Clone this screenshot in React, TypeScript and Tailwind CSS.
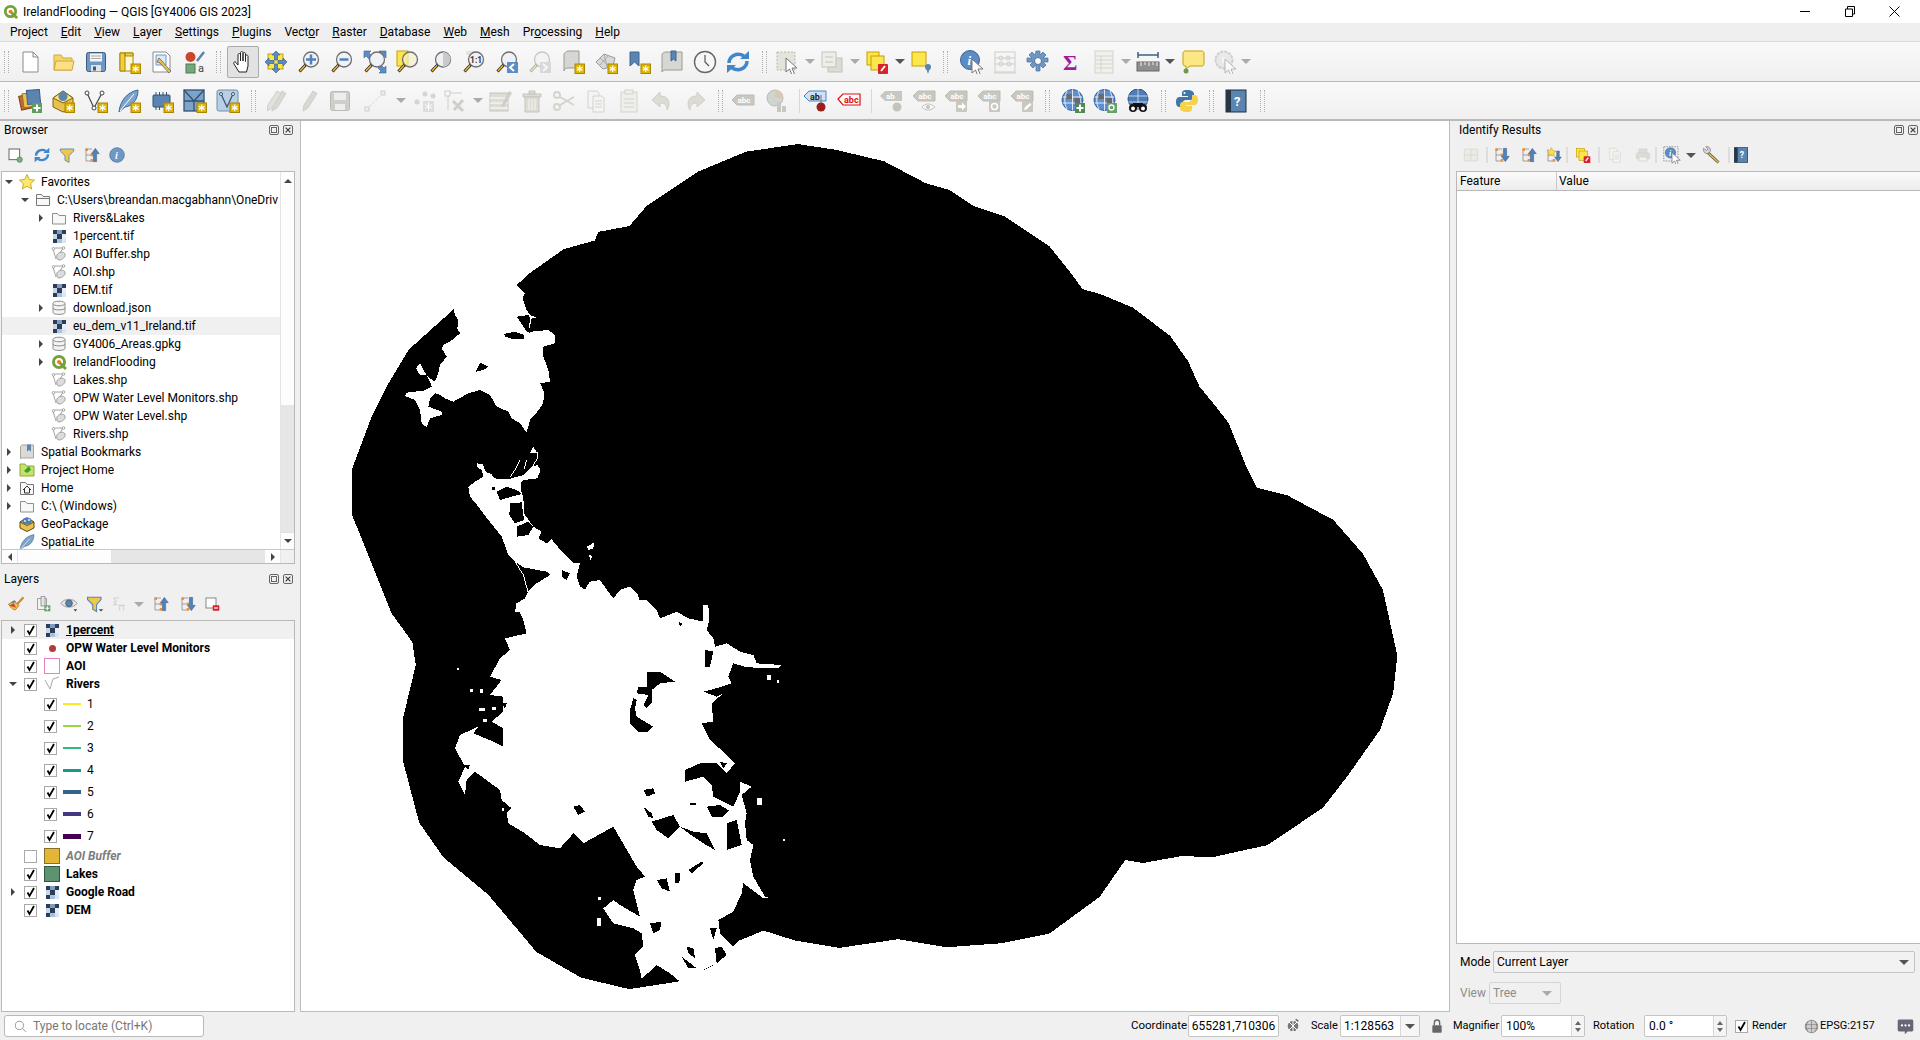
import React from 'react';

/* ---------- small shared drawings ---------- */
const Star = () => (
  <g>
    <rect x="14" y="14" width="9.5" height="9.5" fill="#e0b400" stroke="#a88600" />
    <path d="M18.7 15.5v6.5M15.8 17.2l5.8 3.2M21.6 17.2l-5.8 3.2" stroke="#fff" strokeWidth="1.2" />
  </g>
);
const Mag = ({ fill = '#eef2f6', children }: { fill?: string; children?: React.ReactNode }) => (
  <g>
    <circle cx="14" cy="9.5" r="7.5" fill={fill} stroke="#6f6f6f" strokeWidth="1.3" />
    {children}
    <path d="M8.5 15L2.5 21.5" stroke="#222" strokeWidth="3" />
    <path d="M8 15.5L3 21" stroke="#eebd2c" strokeWidth="1.5" />
  </g>
);
const Cursor = ({ x = 0, y = 0 }: { x?: number; y?: number }) => (
  <path transform={`translate(${x} ${y})`} d="M0 0v14l3.5-3 2.5 6 2.5-1-2.5-6H11z" fill="#fff" stroke="#777" strokeWidth="1" />
);
const Lbl = ({ c = '#c9c8c0', t = '#fff', children }: { c?: string; t?: string; children?: React.ReactNode }) => (
  <g>
    <path d="M1 7l5-5h17v10H6z" fill={c} stroke="#bdbcb4" />
    <text x="6.5" y="10" fontSize="8" fontWeight="700" fontFamily="Roboto, sans-serif" fill={t}>abc</text>
    {children}
  </g>
);
const Globe = ({ children }: { children?: React.ReactNode }) => (
  <g>
    <circle cx="11.5" cy="11" r="10.5" fill="#5f8fd0" stroke="#2f5f9f" />
    <path d="M1.5 8h20M1.5 14h20M11.5 .5v21M6 2c-3 6-3 12 0 18M17 2c3 6 3 12 0 18" stroke="#fff" strokeWidth=".8" fill="none" />
    <path d="M6 5h5v5H5zM13 9h6v6h-5z" fill="#6a6a6a" />
    {children}
  </g>
);
const Pencil = ({ c = '#d9d8d2' }: { c?: string }) => (
  <path d="M5 22l1-6L15 2l4 2.5L10 19z" fill={c} stroke="#cfcec8" />
);
const Arrows = () => (
  <path
    d="M12 1l4 4h-2.5v5H10.500V5H8zM12 23l-4-4h2.500v-5h3v5H16zM1 12l4-4v2.500h5v3H5V16zM23 12l-4 4v-2.500h-5v-3h5V8z"
    fill="#5b8cc4"
    stroke="#3c6596"
    strokeWidth=".7"
  />
);

const icons: Record<string, React.ReactNode> = {
  new: <path d="M5 2h10l5 5v15H5zM15 2v5h5" fill="#fff" stroke="#8a8a8a" />,
  open: (
    <g stroke="#cda93f">
      <path d="M3 20V5h7l2 3h9v12z" fill="#f3d56b" />
      <path d="M3 20l2-9h18l-2 9z" fill="#fbe184" />
    </g>
  ),
  save: (
    <g>
      <rect x="2.500" y="2.500" width="19" height="19" rx="2" fill="#6d97c4" stroke="#415a75" />
      <rect x="6" y="3.500" width="12" height="8" fill="#f4f4f4" />
      <path d="M7 6h10M7 8.500h10" stroke="#aaa" />
      <rect x="7" y="15" width="10" height="6.500" fill="#e4e4e4" />
      <rect x="9" y="16.500" width="3" height="4" fill="#415a75" />
    </g>
  ),
  newLayout: (
    <g>
      <path d="M3 3h13v18H3z" fill="#fff8d8" stroke="#a88600" />
      <path d="M3 3h5v18H3zM8 3h8v3H8z" fill="#f1d040" stroke="#a88600" />
      <Star />
    </g>
  ),
  layouts: (
    <g>
      <path d="M3 2h13l4 4v16H3z" fill="#fff" stroke="#8a8a8a" />
      <path d="M6 5h10v10H6z" fill="#dfe8f4" stroke="#6d97c4" />
      <path d="M9 8l3 3 6 7 3 3-2 2-9-10-3-1z" fill="#e6c04a" stroke="#666" strokeWidth=".8" />
    </g>
  ),
  style: (
    <g>
      <circle cx="7.500" cy="7" r="5" fill="#c9472a" />
      <path d="M14 11L21 2" stroke="#5b84b0" strokeWidth="2.500" />
      <rect x="3" y="14" width="9" height="9" fill="#74a77e" stroke="#4d7a57" />
      <text x="15" y="22" fontSize="11" fontFamily="Roboto, sans-serif" fill="#444">a</text>
    </g>
  ),
  hand: (
    <path
      d="M8 22l-5-8c-1-2 1-3 2-1.500l2 2.500V5c0-2 2.500-2 2.500 0v6V3c0-2 2.500-2 2.500 0v8V4c0-2 2.500-2 2.500 0v7.500-5c0-2 2.500-2 2.500 0V16l-1.500 6z"
      fill="#fff"
      stroke="#222"
      strokeWidth="1"
    />
  ),
  pan: (
    <g>
      <rect x="4" y="4" width="15" height="15" fill="#fbe74c" stroke="#c8a000" />
      <Arrows />
    </g>
  ),
  zoomIn: <Mag><path d="M14 4.500v10M9 9.500h10" stroke="#4f81bd" strokeWidth="2.500" /></Mag>,
  zoomOut: <Mag><path d="M9.500 9.500h9" stroke="#4f81bd" strokeWidth="2.500" /></Mag>,
  zoomFull: (
    <g>
      <path d="M1 1h7l-2 2 3 3-3 3-3-3-2 2zM23 1v7l-2-2-3 3-3-3 3-3-2-2zM23 23h-7l2-2-3-3 3-3 3 3 2-2z" fill="#5b8cc4" stroke="#3c6596" strokeWidth=".6" />
      <Mag />
    </g>
  ),
  zoomSel: (
    <g>
      <rect x="1" y="1" width="11" height="15" fill="#fbe74c" stroke="#c8a000" />
      <Mag fill="#f6f0c8aa" />
    </g>
  ),
  zoomLayer: <Mag><path d="M14 2v15a7.500 7.500 0 0 0 0-15z" fill="#c9c9c9" /></Mag>,
  zoom11: (
    <g>
      <path d="M4 1h12v4H4z" fill="#e4e4e4" />
      <Mag><text x="8" y="13" fontSize="8.500" fontWeight="700" fontFamily="Roboto, sans-serif" fill="#333">1:1</text></Mag>
    </g>
  ),
  zoomLast: (
    <g>
      <Mag />
      <rect x="12" y="12" width="11" height="11" fill="#5b8cc4" />
      <path d="M19 14l-4 3.500 4 3.500" stroke="#fff" strokeWidth="2" fill="none" />
    </g>
  ),
  zoomNext: (
    <g opacity=".35">
      <Mag />
      <rect x="12" y="12" width="11" height="11" fill="#aaa" />
      <path d="M15 14l4 3.500-4 3.500" stroke="#fff" strokeWidth="2" fill="none" />
    </g>
  ),
  newMap: (
    <g>
      <path d="M3 4c2-3 4-3 4-3h11v17H7c-2 0-4 1-4 3z" fill="#d6d6d2" stroke="#9a9a94" />
      <Star />
    </g>
  ),
  new3d: (
    <g>
      <path d="M2 12L10 4l11 4-2 8-10 3z" fill="#d9d9d5" stroke="#999" />
      <path d="M6 8l9 8M10 4l3 13M14 6l-8 9" stroke="#aaa" />
      <Star />
    </g>
  ),
  newBookmark: (
    <g>
      <path d="M3 2h9v14l-4.500-4L3 16z" fill="#5b84b0" stroke="#3c6596" />
      <Star />
    </g>
  ),
  bookmarks: (
    <g>
      <path d="M2 5c0-2 2-3 4-3h16v18H6c-2 0-4 1-4 2z" fill="#d6d6d2" stroke="#9a9a94" />
      <path d="M11 1h5v10l-2.500-2L11 11z" fill="#5b84b0" stroke="#3c6596" />
    </g>
  ),
  clock: (
    <g>
      <circle cx="12" cy="12" r="10.500" fill="#f6f6f6" stroke="#666" strokeWidth="1.400" />
      <path d="M12 5v7l4 4" stroke="#555" strokeWidth="1.200" fill="none" />
    </g>
  ),
  refresh: (
    <g fill="none" stroke="#3f87c9" strokeWidth="3.500">
      <path d="M3 13C3 6 11 2 18 6" />
      <path d="M21 11c0 7-8 11-15 7" />
      <path d="M14 9h9V1zM10 15H1v8z" fill="#3f87c9" stroke="none" />
    </g>
  ),
  select: (
    <g>
      <rect x="2" y="2" width="18" height="18" fill="#e4e3dc" stroke="#b5b4ac" strokeDasharray="2 1.500" />
      <Cursor x={11} y={8} />
    </g>
  ),
  attrs: (
    <g stroke="#c3c2ba">
      <rect x="8" y="8" width="14" height="14" fill="#dddcd4" />
      <rect x="2" y="2" width="14" height="15" fill="#eeeee8" />
      <path d="M5 7h8M5 12h8" fill="none" />
    </g>
  ),
  deselect: (
    <g>
      <rect x="2" y="2" width="12" height="13" fill="#fbe74c" stroke="#c8a000" />
      <rect x="6" y="6" width="13" height="14" fill="#fbe74c" stroke="#c8a000" />
      <rect x="13" y="14" width="10" height="10" rx="1" fill="#d8232a" />
      <path d="M16 21l4-5" stroke="#fff" strokeWidth="2" />
    </g>
  ),
  selLoc: (
    <g>
      <rect x="2" y="2" width="14" height="14" fill="#fbe74c" stroke="#c8a000" />
      <circle cx="18" cy="17" r="3" fill="#5b84b0" />
      <path d="M16 18l2 6 2-6" fill="#5b84b0" />
    </g>
  ),
  identify: (
    <g>
      <circle cx="10" cy="10" r="9.500" fill="#5b8cc4" stroke="#3c6596" />
      <text x="7.500" y="15" fontSize="13" fontStyle="italic" fontWeight="700" fontFamily="Liberation Serif, serif" fill="#fff">i</text>
      <Cursor x={12} y={9} />
    </g>
  ),
  field: (
    <g stroke="#cfcec8" fill="none">
      <rect x="2" y="2" width="20" height="20" />
      <path d="M2 8h20M2 14h20M1 23h22" />
      <circle cx="8" cy="8" r="2" />
      <circle cx="15" cy="8" r="2" />
      <circle cx="8" cy="14" r="2" />
      <circle cx="16" cy="14" r="2" />
    </g>
  ),
  gear: (
    <g>
      <path d="M10 1h4v4l3-3 3 3-3 3h5v4h-5l3 3-3 3-3-3v6h-4v-6l-3 3-3-3 3-3H1v-4h5L3 5l3-3 3 3z" fill="#6d97c4" stroke="#4b7099" strokeWidth=".7" />
      <circle cx="12" cy="11" r="3.500" fill="#fff" stroke="#4b7099" />
    </g>
  ),
  sigma: <text x="4" y="20" fontSize="22" fontWeight="700" fontFamily="Liberation Serif, serif" fill="#9c1d9c">Σ</text>,
  table: (
    <g stroke="#d5d4ce" fill="#f0f0ec">
      <rect x="3" y="1" width="18" height="22" />
      <path d="M3 6h18M3 10h18M3 14h18M3 18h18M9 6v17" fill="none" />
    </g>
  ),
  measure: (
    <g>
      <path d="M2 5h20M2 2v6M22 2v6" stroke="#3c5f85" strokeWidth="1.500" fill="none" />
      <rect x="1" y="12" width="22" height="9" fill="#8f8f8f" stroke="#666" />
      <path d="M5 12v4M9 12v3M13 12v4M17 12v3M21 12v4" stroke="#eee" />
    </g>
  ),
  tip: (
    <g>
      <path d="M2 3c0-1 1-2 2-2h17c1 0 2 1 2 2v11c0 1-1 2-2 2H9l-4 3v-3H4c-1 0-2-1-2-2z" fill="#fbe884" stroke="#c8a000" />
      <circle cx="5" cy="21" r="2.500" fill="#6d9a4a" />
    </g>
  ),
  deco: (
    <g opacity=".5">
      <circle cx="11" cy="10" r="8.500" fill="#ddd" stroke="#aaa" strokeDasharray="3 1" strokeWidth="2" />
      <path d="M9 6l6 4-6 4z" fill="#f4f4f4" />
      <Cursor x={12} y={9} />
    </g>
  ),
  dsm: (
    <g>
      <rect x="2" y="6" width="13" height="14" transform="rotate(-12 8 13)" fill="#c86a2e" stroke="#7a3e1a" />
      <rect x="5" y="4" width="13" height="14" transform="rotate(-8 11 11)" fill="#e8c14e" stroke="#8f7420" />
      <rect x="9" y="1" width="13" height="14" transform="rotate(-5 15 8)" fill="#5b84b0" stroke="#3c5f85" />
      <rect x="14" y="14" width="10" height="10" fill="#5e9f5e" />
      <path d="M19 15.500v7M15.500 19h7" stroke="#fff" strokeWidth="2" />
    </g>
  ),
  newGpkg: (
    <g>
      <path d="M2 9l10-7 10 7v9l-10 5-10-5z" fill="#e8c14e" stroke="#7d6412" />
      <path d="M2 9l10 5 10-5-10-7z" fill="#fbe27b" stroke="#7d6412" />
      <circle cx="12" cy="7.500" r="4.500" fill="#5b84b0" />
      <Star />
    </g>
  ),
  newShp: (
    <g>
      <path d="M3 4l7 15 8-15" fill="none" stroke="#444" strokeWidth="1.200" />
      <circle cx="3" cy="4" r="2" fill="#fff" stroke="#444" />
      <circle cx="10" cy="19" r="2" fill="#fff" stroke="#444" />
      <circle cx="18" cy="4" r="2" fill="#fff" stroke="#444" />
      <Star />
    </g>
  ),
  newSpatialite: (
    <g>
      <path d="M2 23C3 12 10 3 21 1c0 9-5 16-13 17z" fill="#7ba3cb" stroke="#3c6596" />
      <path d="M3 22L17 5" stroke="#fff" />
      <Star />
    </g>
  ),
  newTemp: (
    <g>
      <rect x="3" y="6" width="17" height="12" rx="1" fill="#5b84b0" stroke="#34526f" />
      <path d="M6 3v3M9.500 3v3M13 3v3M16.500 3v3M6 18v3M9.500 18v3" stroke="#34526f" />
      <Star />
    </g>
  ),
  newMesh: (
    <g>
      <rect x="1" y="1" width="20" height="21" fill="#7ba3cb" stroke="#34526f" strokeWidth="1.300" />
      <path d="M1 12h20M11 12v10M1 1l10 11M21 1L11 12" stroke="#34526f" strokeWidth="1.300" />
      <Star />
    </g>
  ),
  newVirtual: (
    <g>
      <rect x="1" y="1" width="21" height="21" rx="2" fill="#b9cfe4" stroke="#6d8eae" />
      <path d="M5 5l6 13 6-13" fill="none" stroke="#34526f" strokeWidth="1.200" />
      <circle cx="5" cy="5" r="1.500" fill="#fff" stroke="#34526f" />
      <circle cx="17" cy="5" r="1.500" fill="#fff" stroke="#34526f" />
      <Star />
    </g>
  ),
  multiEdit: (
    <g>
      <Pencil />
      <g transform="translate(-5 0)"><Pencil c="#e2e1db" /></g>
    </g>
  ),
  pencil: <g transform="translate(1 0)"><Pencil /></g>,
  saveEdits: (
    <g>
      <rect x="2.500" y="2.500" width="19" height="19" rx="2" fill="#cfcfc9" stroke="#bbb" />
      <rect x="6" y="4" width="12" height="7" fill="#eee" />
      <rect x="7" y="15" width="10" height="6" fill="#eee" />
    </g>
  ),
  digit: (
    <g stroke="#d0cfc8" fill="#eee">
      <path d="M4 20L20 4" strokeDasharray="2 2" />
      <rect x="2" y="18" width="4" height="4" />
      <rect x="18" y="2" width="4" height="4" />
    </g>
  ),
  addPts: (
    <g fill="#d5d4cd">
      <circle cx="5" cy="13" r="2.500" />
      <circle cx="13" cy="5" r="2.500" />
      <circle cx="21" cy="7" r="2.500" />
      <rect x="11" y="12" width="11" height="11" fill="#ddd" />
      <path d="M16.500 13.500v8M13 15.500l7 4M20 15.500l-7 4" stroke="#fff" />
    </g>
  ),
  vertex: (
    <g stroke="#cfcec8" fill="none">
      <rect x="2" y="2" width="5" height="5" />
      <path d="M5 7v14M7 4h12" />
      <path d="M10 12l10 10M20 11L11 21" strokeWidth="3" />
    </g>
  ),
  editTable: (
    <g>
      <rect x="2" y="4" width="18" height="18" fill="#dddcd5" stroke="#c6c5bd" />
      <path d="M2 9h18M2 14h18M2 19h18" stroke="#fff" />
      <path d="M13 17L21 2l3 2-8 14z" fill="#cfcec8" />
    </g>
  ),
  trash: (
    <g stroke="#c6c5bd" fill="#dcdbd4">
      <path d="M3 5h18v3H3zM9 5V2h6v3z" />
      <path d="M5 8h14v15H5z" />
      <path d="M9 10v11M12 10v11M15 10v11" stroke="#f4f4f4" />
    </g>
  ),
  cut: (
    <g stroke="#d4d3cc" strokeWidth="2" fill="none">
      <circle cx="5" cy="6" r="3" />
      <circle cx="5" cy="18" r="3" />
      <path d="M8 8l14 8M8 16l14-8" />
    </g>
  ),
  copy: (
    <g stroke="#d4d3cc" fill="#f4f4f2">
      <path d="M4 2h9l2 2v15H4z" />
      <path d="M9 7h9l2 2v14H9z" />
      <path d="M11 12h7M11 15h7M11 18h7" fill="none" />
    </g>
  ),
  paste: (
    <g stroke="#d4d3cc" fill="#eeeeea">
      <rect x="4" y="3" width="16" height="20" />
      <rect x="8" y="1" width="8" height="4" />
      <path d="M7 10h10M7 14h10M7 18h10" fill="none" />
    </g>
  ),
  undo: <path d="M10 3L2 11l8 7v-4c5 0 7 2 7 7 4-7 2-14-7-14z" fill="#dcdbd4" stroke="#cfcec8" />,
  redo: <path d="M14 3l8 8-8 7v-4c-5 0-7 2-7 7-4-7-2-14 7-14z" fill="#dcdbd4" stroke="#cfcec8" />,
  label: <g transform="translate(0 4)"><Lbl /></g>,
  diagram: (
    <g>
      <circle cx="10" cy="9" r="8" fill="#cfd6cf" stroke="#bbb" />
      <path d="M10 9V1a8 8 0 0 1 8 8z" fill="#d9c9b0" />
      <rect x="12" y="13" width="4" height="10" fill="#c9c8c0" />
      <rect x="17" y="17" width="4" height="6" fill="#c9c8c0" />
    </g>
  ),
  labelPin: (
    <g>
      <path d="M1 7l5-5h17v10H6z" fill="#cfe0f4" stroke="#3f87c9" />
      <text x="7" y="10.500" fontSize="9" fontWeight="700" fontFamily="Roboto, sans-serif" fill="#222">ab</text>
      <circle cx="18" cy="18" r="4.500" fill="#9c1f1f" />
      <path d="M18 6v8" stroke="#777" />
    </g>
  ),
  labelRed: (
    <g transform="translate(0 2)">
      <path d="M1 8l5-5h17v11H6z" fill="#fff" stroke="#e01010" strokeWidth="1.200" />
      <text x="7" y="12" fontSize="9" fontWeight="700" fontFamily="Roboto, sans-serif" fill="#e01010">abc</text>
    </g>
  ),
  labelPinOff: (
    <g>
      <path d="M1 7l5-5h17v10H6z" fill="#c9c8c0" />
      <text x="7" y="10" fontSize="8" fontWeight="700" fontFamily="Roboto, sans-serif" fill="#fff">ab</text>
      <circle cx="18" cy="18" r="4.500" fill="#c4c3bb" />
    </g>
  ),
  labelShow: (
    <Lbl>
      <path d="M10 18c3-4 9-4 13 0-4 4-10 4-13 0z" fill="#f6f6f6" stroke="#c4c3bb" />
      <circle cx="16" cy="18" r="2" fill="#c4c3bb" />
    </Lbl>
  ),
  labelMove: (
    <Lbl>
      <rect x="12" y="12" width="11" height="11" rx="1" fill="#c9c8c0" />
      <path d="M14 16h4v-2.500l4 4-4 4V19h-4z" fill="#fff" />
    </Lbl>
  ),
  labelRotate: (
    <Lbl>
      <rect x="12" y="12" width="11" height="11" rx="1" fill="#c9c8c0" />
      <circle cx="17.500" cy="17.500" r="3" fill="none" stroke="#fff" strokeWidth="1.500" />
    </Lbl>
  ),
  labelEdit: (
    <Lbl>
      <rect x="12" y="12" width="11" height="11" rx="1" fill="#c9c8c0" />
      <path d="M14 21l1-3 5-4 1.500 1.500-5 5z" fill="#fff" />
    </Lbl>
  ),
  globeAdd: (
    <Globe>
      <rect x="14" y="14" width="10" height="10" fill="#4f8a4f" />
      <path d="M19 15.500v7M15.500 19h7" stroke="#fff" strokeWidth="2" />
    </Globe>
  ),
  globeFind: (
    <Globe>
      <rect x="14" y="14" width="10" height="10" fill="#6aa06a" />
      <circle cx="18.500" cy="18.500" r="2.500" fill="none" stroke="#fff" strokeWidth="1.300" />
    </Globe>
  ),
  globeBin: (
    <g>
      <circle cx="12" cy="10" r="10" fill="#4e7db8" stroke="#2b4f7c" />
      <path d="M2 7h20M2 13h20M12 0v20" stroke="#dfe8f4" strokeWidth=".8" />
      <circle cx="7" cy="19" r="4" fill="#111" />
      <circle cx="17" cy="19" r="4" fill="#111" />
      <rect x="7" y="14" width="10" height="4" fill="#111" />
      <circle cx="7" cy="19.500" r="2" fill="#fff" />
      <circle cx="17" cy="19.500" r="2" fill="#fff" />
    </g>
  ),
  python: (
    <g>
      <path d="M12 1C7 1 7 3 7 5v2h6v1H5C2 8 1 10 1 13s1 5 4 5h2v-3c0-2 2-4 4-4h5c2 0 3-1 3-3V5c0-2-2-4-7-4z" fill="#3f78a8" />
      <path d="M12 23c5 0 5-2 5-4v-2h-6v-1h8c3 0 4-2 4-5s-1-5-4-5h-2v3c0 2-2 4-4 4H8c-2 0-3 1-3 3v3c0 2 2 4 7 4z" fill="#f5d24a" />
      <circle cx="9.500" cy="4" r="1" fill="#fff" />
    </g>
  ),
  help: (
    <g>
      <rect x="2" y="1" width="20" height="22" fill="#5b84b0" stroke="#1f2f3f" />
      <rect x="2" y="1" width="5" height="22" fill="#253646" />
      <text x="10" y="17" fontSize="13" fontWeight="700" fontFamily="Roboto, sans-serif" fill="#fff">?</text>
    </g>
  ),
  /* dock toolbars, drawn in the same 24 box */
  addSel: (
    <g>
      <rect x="3" y="3" width="16" height="16" fill="#fff" stroke="#666" strokeWidth="1.500" />
      <circle cx="19" cy="19" r="4" fill="#7cb07c" stroke="#4d7a57" />
    </g>
  ),
  filter: <path d="M2 3h20v3l-7 7v10l-6-3v-7L2 6z" fill="#f0c94a" stroke="#6d8eae" strokeWidth="1.500" />,
  collapse: (
    <g>
      <path d="M3 3h9M3 3v18h9M3 12h9" stroke="#777" fill="none" />
      <rect x="2" y="2" width="4" height="4" fill="#f0913a" />
      <rect x="10" y="10" width="4" height="4" fill="#f0913a" />
      <rect x="10" y="18" width="4" height="4" fill="#f0913a" />
      <path d="M18 2l6 8h-4v12h-5V10h-3z" transform="translate(-1 0)" fill="#4f81bd" stroke="#34526f" strokeWidth=".6" />
    </g>
  ),
  expand: (
    <g>
      <path d="M3 3h9M3 3v18h9M3 12h9" stroke="#777" fill="none" />
      <rect x="2" y="2" width="4" height="4" fill="#f0913a" />
      <rect x="10" y="10" width="4" height="4" fill="#f0913a" />
      <rect x="10" y="18" width="4" height="4" fill="#f0913a" />
      <path d="M17 22l6-8h-4V2h-5v12h-3z" fill="#4f81bd" stroke="#34526f" strokeWidth=".6" />
    </g>
  ),
  info: (
    <g>
      <circle cx="12" cy="12" r="11" fill="#6d97c4" stroke="#4b7099" />
      <text x="9" y="18" fontSize="15" fontStyle="italic" fontWeight="700" fontFamily="Liberation Serif, serif" fill="#fff">i</text>
    </g>
  ),
  brush: (
    <g>
      <path d="M12 14L22 3" stroke="#c98f2a" strokeWidth="3" />
      <path d="M2 12l8-4 6 6-5 6c-3 0-7-4-9-8z" fill="#e8c14e" stroke="#b5651d" />
      <path d="M3 14l6-3 3 6z" fill="#c9472a" />
      <path d="M6 9l4-2 2 2-4 2z" fill="#5b84b0" />
    </g>
  ),
  addGroup: (
    <g>
      <rect x="4" y="4" width="13" height="16" fill="#f3f3f3" stroke="#777" />
      <rect x="9" y="1" width="6" height="14" fill="#e4e4e4" stroke="#777" />
      <rect x="14" y="14" width="9" height="9" fill="#6aa06a" />
      <path d="M18.500 15.500v6M15.500 18.500h6" stroke="#fff" strokeWidth="1.600" />
    </g>
  ),
  eye: (
    <g>
      <path d="M1 11c5-7 17-7 22 0-5 7-17 7-22 0z" fill="#e4e4e4" stroke="#888" />
      <circle cx="12" cy="11" r="4.500" fill="#5b84b0" stroke="#34526f" />
      <path d="M18 19h5l-2.500 3z" fill="#444" />
    </g>
  ),
  filterDrop: (
    <g>
      <path d="M2 3h18v3l-6 7v9l-5-3v-6L2 6z" fill="#f0c94a" stroke="#5b84b0" strokeWidth="1.500" />
      <path d="M17 19h6l-3 3z" fill="#444" />
    </g>
  ),
  expr: (
    <g stroke="#d0cfc8" fill="none" strokeWidth="1.500">
      <path d="M12 3H4l4 5-4 1 5 4H3" />
      <path d="M13 22v-5a3 3 0 0 1 6 0v5M11 14h10" />
    </g>
  ),
  removeLayer: (
    <g>
      <rect x="3" y="3" width="15" height="15" fill="#fff" stroke="#777" strokeWidth="1.300" />
      <rect x="13" y="14" width="10" height="8" rx="1" fill="#d8232a" />
      <path d="M15 18h6" stroke="#fff" strokeWidth="1.800" />
    </g>
  ),
  treeCard: (
    <g stroke="#d5d4ce" fill="#ebebe6">
      <rect x="2" y="3" width="20" height="18" rx="1" />
      <path d="M12 3v18M2 12h20" fill="none" />
    </g>
  ),
  starDown: (
    <g>
      <path d="M3 3v18h9M3 12h9" stroke="#777" fill="none" />
      <rect x="10" y="18" width="4" height="4" fill="#f0913a" />
      <path d="M8 1l2.500 4.500L15 6l-3.500 3 1 5-4.500-2.500L4 14l1-5L1.500 6l4.500-.5z" fill="#fbe04a" stroke="#d1a72c" />
      <path d="M18 22l5-7h-3V6h-4v9h-3z" fill="#4f81bd" stroke="#34526f" strokeWidth=".6" />
    </g>
  ),
  printer: (
    <g fill="#dcdcd8" stroke="#cfcfca">
      <rect x="6" y="3" width="12" height="7" />
      <rect x="2" y="9" width="20" height="9" rx="2" />
      <rect x="6" y="15" width="12" height="6" fill="#f2f2f0" />
    </g>
  ),
  identifySel: (
    <g>
      <rect x="1" y="1" width="19" height="19" fill="none" stroke="#777" strokeDasharray="2 1.500" />
      <circle cx="10" cy="9" r="7.500" fill="#5b8cc4" />
      <text x="8" y="13" fontSize="11" fontStyle="italic" fontWeight="700" fontFamily="Liberation Serif, serif" fill="#fff">i</text>
      <Cursor x={12} y={9} />
    </g>
  ),
  wrench: (
    <g>
      <path d="M8 9L22 22" stroke="#555" strokeWidth="4" />
      <path d="M9 10L22 22" stroke="#e0b93c" strokeWidth="2.200" />
      <path d="M2 3l4 3 2-2-3-3c3-1 7 1 6 6L8 10C4 11 1 7 2 3z" fill="#d8d8d8" stroke="#777" />
    </g>
  ),
  lock: (
    <g>
      <path d="M8 11V7a4 4 0 0 1 8 0v4" fill="none" stroke="#666" strokeWidth="2" />
      <rect x="5" y="11" width="14" height="11" rx="1" fill="#666" />
    </g>
  ),
  ctm: (
    <g>
      <circle cx="12" cy="12" r="8" fill="#777" />
      <path d="M6 6l12 12M18 6L6 18M12 3v18" stroke="#fff" strokeWidth="1.500" />
      <path d="M16 2l4 3" stroke="#555" strokeWidth="2" />
    </g>
  ),
  crs: (
    <g>
      <circle cx="12" cy="12" r="10" fill="#cfcfcf" stroke="#666" />
      <path d="M2 9h20M2 15h20M12 2v20M6 4c-3 5-3 11 0 16M18 4c3 5 3 11 0 16" stroke="#666" strokeWidth=".8" fill="none" />
    </g>
  ),
  msg: (
    <g>
      <path d="M3 2h18c1 0 2 1 2 2v13c0 1-1 2-2 2h-6l-4 4v-4H3c-1 0-2-1-2-2V4c0-1 1-2 2-2z" fill="#667" />
      <circle cx="7" cy="10.500" r="1.600" fill="#fff" />
      <circle cx="12" cy="10.500" r="1.600" fill="#fff" />
      <circle cx="17" cy="10.500" r="1.600" fill="#fff" />
    </g>
  ),
  search: (
    <g fill="none" stroke="#8c8c8c" strokeWidth="1.600">
      <circle cx="10" cy="10" r="7.500" />
      <path d="M15.500 15.500L22 22" />
    </g>
  ),
};

const Ic = ({ n, className = 'w-6 h-6' }: { n: string; className?: string }) => (
  <svg viewBox="0 0 24 24" className={`block shrink-0 ${className}`}>{icons[n]}</svg>
);

const Caret = ({ dim }: { dim?: boolean }) => (
  <span className={`w-0 h-0 border-x-[5px] border-x-transparent border-t-[5px] ${dim ? 'border-t-[#aaaaaa]' : 'border-t-[#555555]'}`} />
);

const Grip = ({ className }: { className: string }) => (
  <div className={`flex justify-center shrink-0 ${className}`}>
    <div className="w-[5px] h-[22px] border-x border-dotted border-[#b0b0b0]" />
  </div>
);

type Item = [string, string];

const ToolRow = ({ items, className }: { items: Item[]; className: string }) => (
  <div className={`flex items-center bg-linear-to-b from-[#f9f9f9] to-[#f0f0f0] ${className}`}>
    {items.map(([n, w], idx) => {
      if (n === 'grip') return <Grip key={idx} className={w} />;
      if (n === 'arrow' || n === 'arrowDim')
        return (
          <div key={idx} className={`flex justify-center shrink-0 ${w}`}>
            <Caret dim={n === 'arrowDim'} />
          </div>
        );
      if (n === 'sep')
        return (
          <div key={idx} className={`flex justify-center shrink-0 ${w}`}>
            <div className="w-px h-[24px] bg-[#d8d8d8]" />
          </div>
        );
      if (n === 'hand')
        return (
          <div key={idx} className={`flex justify-center shrink-0 ${w}`}>
            <div className="w-[32px] h-[32px] rounded-[2px] flex items-center justify-center bg-[#e2e2e2] border border-[#ababab]">
              <Ic n="hand" />
            </div>
          </div>
        );
      return (
        <div key={idx} className={`flex justify-center shrink-0 ${w}`}>
          <Ic n={n} />
        </div>
      );
    })}
  </div>
);

const row1: Item[] = [
  ['grip', 'w-[13px]'],
  ['new', 'w-[33px]'], ['open', 'w-[33px]'], ['save', 'w-[33px]'], ['newLayout', 'w-[33px]'], ['layouts', 'w-[33px]'], ['style', 'w-[33px]'],
  ['grip', 'w-[15px]'],
  ['hand', 'w-[33px]'], ['pan', 'w-[33px]'], ['zoomIn', 'w-[33px]'], ['zoomOut', 'w-[33px]'], ['zoomFull', 'w-[33px]'], ['zoomSel', 'w-[33px]'],
  ['zoomLayer', 'w-[33px]'], ['zoom11', 'w-[33px]'], ['zoomLast', 'w-[33px]'], ['zoomNext', 'w-[33px]'], ['newMap', 'w-[33px]'], ['new3d', 'w-[33px]'],
  ['newBookmark', 'w-[33px]'], ['bookmarks', 'w-[33px]'], ['clock', 'w-[33px]'], ['refresh', 'w-[33px]'],
  ['grip', 'w-[20px]'],
  ['select', 'w-[26px]'], ['arrowDim', 'w-[19px]'], ['attrs', 'w-[26px]'], ['arrowDim', 'w-[19px]'], ['deselect', 'w-[26px]'], ['arrow', 'w-[19px]'], ['selLoc', 'w-[26px]'],
  ['grip', 'w-[20px]'],
  ['identify', 'w-[33px]'], ['field', 'w-[33px]'], ['gear', 'w-[33px]'], ['sigma', 'w-[33px]'],
  ['table', 'w-[33px]'], ['arrowDim', 'w-[11px]'], ['measure', 'w-[33px]'], ['arrow', 'w-[12px]'], ['tip', 'w-[34px]'], ['deco', 'w-[30px]'], ['arrowDim', 'w-[12px]'],
];

const row2: Item[] = [
  ['grip', 'w-[13px]'],
  ['dsm', 'w-[33px]'], ['newGpkg', 'w-[33px]'], ['newShp', 'w-[33px]'], ['newSpatialite', 'w-[33px]'], ['newTemp', 'w-[33px]'], ['newMesh', 'w-[33px]'], ['newVirtual', 'w-[33px]'],
  ['grip', 'w-[18px]'],
  ['multiEdit', 'w-[33px]'], ['pencil', 'w-[27px]'], ['saveEdits', 'w-[36px]'], ['digit', 'w-[34px]'], ['arrowDim', 'w-[17px]'], ['addPts', 'w-[30px]'], ['vertex', 'w-[32px]'], ['arrowDim', 'w-[13px]'],
  ['editTable', 'w-[32px]'], ['trash', 'w-[32px]'], ['cut', 'w-[32px]'], ['copy', 'w-[32px]'], ['paste', 'w-[33px]'], ['undo', 'w-[33px]'], ['redo', 'w-[33px]'],
  ['grip', 'w-[19px]'],
  ['label', 'w-[26px]'], ['diagram', 'w-[42px]'], ['sep', 'w-[2px]'], ['labelPin', 'w-[30px]'], ['labelRed', 'w-[38px]'], ['sep', 'w-[6px]'],
  ['labelPinOff', 'w-[34px]'], ['labelShow', 'w-[32px]'], ['labelMove', 'w-[32px]'], ['labelRotate', 'w-[34px]'], ['labelEdit', 'w-[32px]'],
  ['grip', 'w-[19px]'],
  ['globeAdd', 'w-[32px]'], ['globeFind', 'w-[32px]'], ['globeBin', 'w-[34px]'],
  ['grip', 'w-[16px]'], ['python', 'w-[32px]'], ['grip', 'w-[17px]'], ['help', 'w-[32px]'], ['grip', 'w-[20px]'],
];

/* ---------- tree icons ---------- */
const Raster = () => (
  <svg viewBox="0 0 12 12" className="block w-[13px] h-[13px] shrink-0" shapeRendering="crispEdges">
    <rect width="12" height="12" fill="#fff" />
    <rect x="0" y="0" width="4" height="4" fill="#2c3e57" />
    <rect x="4" y="0" width="4" height="4" fill="#7f9cc0" />
    <rect x="8" y="0" width="4" height="4" fill="#2c3e57" />
    <rect x="0" y="4" width="4" height="4" fill="#c6d7ea" />
    <rect x="4" y="4" width="4" height="4" fill="#2c3e57" />
    <rect x="8" y="4" width="4" height="4" fill="#e6eef7" />
    <rect x="0" y="8" width="4" height="4" fill="#2c3e57" />
    <rect x="4" y="8" width="4" height="4" fill="#a9c1dc" />
    <rect x="8" y="8" width="4" height="4" fill="#dbe6f2" />
  </svg>
);
const tree: Record<string, React.ReactNode> = {
  star: <path d="M8 .5l2.300 5 5.200.6-3.900 3.600 1.100 5.300L8 12.300 3.300 15l1.100-5.300L.5 6.100l5.200-.6z" fill="#fbe96a" stroke="#c9a93a" />,
  folder: <path d="M1.500 14V3.500h5l1.500 2h6.500V14z" fill="#f8f8f8" stroke="#8f8f8f" />,
  folderOpen: <path d="M1.500 13.500V2.500h5l1.500 2h6.500v9zM1.500 6.500h13" fill="#f8f8f8" stroke="#777" />,
  shp: (
    <g fill="none" stroke="#9a9a9a" strokeWidth=".9">
      <path d="M2 3l3 10M4 2h8l-3 5" />
      <path d="M6 9c1-3 7-4 8-1s-3 6-6 6c-2 0-3-3-2-5z" fill="#dcdcdc" />
      <circle cx="2.500" cy="2.800" r="1.300" fill="#fff" />
      <circle cx="12.500" cy="2" r="1.300" fill="#fff" />
    </g>
  ),
  db: (
    <g fill="#f4f4f4" stroke="#8c8c8c">
      <path d="M2 3.500v9c0 2.500 12 2.500 12 0v-9" />
      <ellipse cx="8" cy="3.500" rx="6" ry="2.300" />
      <path d="M2 8c0 2.500 12 2.500 12 0" fill="none" />
    </g>
  ),
  qgis: (
    <g>
      <circle cx="8" cy="8" r="5.500" fill="#fff" stroke="#75a03a" strokeWidth="3" />
      <path d="M9 9l6 6" stroke="#75a03a" strokeWidth="3" />
      <circle cx="8" cy="8" r="2" fill="#ee7913" />
    </g>
  ),
  book: (
    <g>
      <path d="M1.500 3c0-1 1-2 2-2h11v13h-11c-1 0-2 .5-2 1z" fill="#d9d9d5" stroke="#a6a6a0" />
      <path d="M8 .5h4v7L10 6 8 7.500z" fill="#5b84b0" />
    </g>
  ),
  projHome: (
    <g>
      <path d="M1 14V2h5l1.500 2H15v10z" fill="#c9e06a" stroke="#8fa83a" />
      <path d="M5 9l5-5 2 4-4 3z" fill="#2fa32f" />
    </g>
  ),
  home: (
    <g>
      <path d="M1.500 14.500V2.500h5l1.500 2h6.500v10z" fill="#f8f8f8" stroke="#777" />
      <path d="M4 10l4-4 4 4M5.500 9v4h5V9" fill="none" stroke="#333" />
    </g>
  ),
  gpkg: (
    <g>
      <path d="M1 6l7-4 7 4v6l-7 3.500L1 12z" fill="#e8c14e" stroke="#5a4a10" />
      <path d="M1 6l7 3.500L15 6 8 2z" fill="#fbe27b" stroke="#5a4a10" />
      <ellipse cx="8" cy="5" rx="5" ry="3.500" fill="#4f7fb0" />
      <path d="M5 4h2v2H5zM9 3h2v2H9z" fill="#cfcfcf" />
    </g>
  ),
  feather: (
    <g>
      <path d="M1 15.500C2 8 7 2 15 .5c0 6-3 11-9.500 12z" fill="#7ba3cb" stroke="#4b7099" strokeWidth=".6" />
      <path d="M1.500 15L11 4.500" stroke="#fff" strokeWidth=".6" />
    </g>
  ),
};
const Tr = ({ n }: { n: string }) => <svg viewBox="0 0 16 16" className="block w-4 h-4 shrink-0">{tree[n]}</svg>;

const Arrow = ({ open, className }: { open?: boolean; className?: string }) =>
  open ? (
    <span className={`w-0 h-0 border-x-[4px] border-x-transparent border-t-[4px] border-t-[#444444] ${className ?? ''}`} />
  ) : (
    <span className={`w-0 h-0 border-y-[4px] border-y-transparent border-l-[4px] border-l-[#444444] ${className ?? ''}`} />
  );

const browserRows: [number, string, string, boolean | null, boolean?][] = [
  [0, 'star', 'Favorites', true],
  [1, 'folderOpen', 'C:\\Users\\breandan.macgabhann\\OneDriv', true],
  [2, 'folder', 'Rivers&Lakes', false],
  [2, 'raster', '1percent.tif', null],
  [2, 'shp', 'AOI Buffer.shp', null],
  [2, 'shp', 'AOI.shp', null],
  [2, 'raster', 'DEM.tif', null],
  [2, 'db', 'download.json', false],
  [2, 'raster', 'eu_dem_v11_Ireland.tif', null, true],
  [2, 'db', 'GY4006_Areas.gpkg', false],
  [2, 'qgis', 'IrelandFlooding', false],
  [2, 'shp', 'Lakes.shp', null],
  [2, 'shp', 'OPW Water Level Monitors.shp', null],
  [2, 'shp', 'OPW Water Level.shp', null],
  [2, 'shp', 'Rivers.shp', null],
  [0, 'book', 'Spatial Bookmarks', false],
  [0, 'projHome', 'Project Home', false],
  [0, 'home', 'Home', false],
  [0, 'folder', 'C:\\ (Windows)', false],
  [0, 'gpkg', 'GeoPackage', null],
  [0, 'feather', 'SpatiaLite', null],
];

const indent = ['pl-[2px]', 'pl-[18px]', 'pl-[34px]'];

const BrowserTree = () => (
  <div className="flex-1 min-w-0 overflow-hidden pt-[1px]">
    {browserRows.map(([lvl, icon, label, open, sel]) => (
      <div key={label} className={`flex items-center h-[18px] whitespace-nowrap ${indent[lvl]} ${sel ? 'bg-[#f0f0f0]' : ''}`}>
        <div className="w-[10px] flex justify-center shrink-0">
          {open !== null && <Arrow open={open} />}
        </div>
        <div className="w-[16px] ml-[5px] flex justify-center shrink-0">
          {icon === 'raster' ? <Raster /> : <Tr n={icon} />}
        </div>
        <span className="ml-[6px]">{label}</span>
      </div>
    ))}
  </div>
);

const Check = ({ on = true }: { on?: boolean }) => (
  <div className="w-[13px] h-[13px] border border-[#a9a9a9] bg-white shrink-0 flex items-center justify-center">
    {on && (
      <svg viewBox="0 0 11 11" className="block w-[11px] h-[11px]">
        <path d="M2.500 5.500l2 3.500L9 1" fill="none" stroke="#000" strokeWidth="1.800" />
      </svg>
    )}
  </div>
);

const LayerRow = ({
  arrow,
  icon,
  children,
  on = true,
  className = '',
}: {
  arrow?: 'open' | 'closed';
  icon: React.ReactNode;
  children: React.ReactNode;
  on?: boolean;
  className?: string;
}) => (
  <div className={`flex items-center h-[18px] font-bold ${className}`}>
    <div className="w-[22px] flex justify-center shrink-0">
      {arrow && <Arrow open={arrow === 'open'} />}
    </div>
    <Check on={on} />
    <div className="w-[16px] ml-[7px] flex justify-center shrink-0">{icon}</div>
    <span className="ml-[6px]">{children}</span>
  </div>
);

const rivers: [string, string, string][] = [
  ['1', 'bg-[#fde725]', 'h-[2px]'],
  ['2', 'bg-[#95d840]', 'h-[2px]'],
  ['3', 'bg-[#35b779]', 'h-[2px]'],
  ['4', 'bg-[#1f968b]', 'h-[3px]'],
  ['5', 'bg-[#33638d]', 'h-[4px]'],
  ['6', 'bg-[#453781]', 'h-[4px]'],
  ['7', 'bg-[#440154]', 'h-[5px]'],
];

const LayersTree = () => (
  <div className="flex-1 min-h-0 border border-[#b9b9b9] bg-white">
    <LayerRow arrow="closed" icon={<Raster />} className="bg-[#f0f0f0]">
      <span className="underline">1percent</span>
    </LayerRow>
    <LayerRow icon={<span className="w-[7px] h-[7px] rounded-full bg-[#b53a3a]" />}>OPW Water Level Monitors</LayerRow>
    <LayerRow icon={<span className="w-[16px] h-[16px] border border-[#e880c8] bg-white" />}>AOI</LayerRow>
    <LayerRow
      arrow="open"
      icon={
        <svg viewBox="0 0 16 16" className="block w-4 h-4">
          <path d="M1 4l5 9 3-10 6-2" fill="none" stroke="#aaa" />
        </svg>
      }
    >
      Rivers
    </LayerRow>
    <div>
      {rivers.map(([label, bg, h]) => (
        <div key={label} className="flex items-center h-[22px] pl-[42px]">
          <Check />
          <div className={`ml-[6px] w-[18px] ${h} ${bg}`} />
          <span className="ml-[6px]">{label}</span>
        </div>
      ))}
    </div>
    <LayerRow on={false} icon={<span className="w-[16px] h-[16px] border border-[#85702a] bg-[#e5b636]" />}>
      <span className="italic text-[#7d7d7d]">AOI Buffer</span>
    </LayerRow>
    <LayerRow icon={<span className="w-[16px] h-[16px] border border-[#2f5a3f] bg-[#5b946f]" />}>Lakes</LayerRow>
    <LayerRow arrow="closed" icon={<Raster />}>Google Road</LayerRow>
    <LayerRow icon={<Raster />}>DEM</LayerRow>
  </div>
);

const DockHead = ({ title }: { title: string }) => (
  <div className="flex items-center justify-between h-[18px]">
    <span>{title}</span>
    <div className="flex gap-[4px] pr-[2px]">
      <span className="w-[10px] h-[10px] border border-[#666666] rounded-[2px] relative">
        <span className="block w-[6px] h-[6px] ml-[1px] mt-[1px] border border-[#666666]" />
      </span>
      <svg viewBox="0 0 10 10" className="block w-[10px] h-[10px] border border-[#666666] rounded-[2px]">
        <path d="M2 2l6 6M8 2L2 8" stroke="#444" strokeWidth="1.600" />
      </svg>
    </div>
  </div>
);

const ScrollV = () => (
  <div className="w-[14px] shrink-0 flex flex-col border-l border-[#e4e4e4] bg-[#fdfdfd]">
    <div className="h-[17px] flex items-center justify-center">
      <span className="w-0 h-0 border-x-[4px] border-x-transparent border-b-[4px] border-b-[#444444]" />
    </div>
    <div className="flex-1" />
    <div className="h-[127px] bg-[#e6e6e6]" />
    <div className="h-[17px] flex items-center justify-center border-t border-[#e0e0e0]">
      <span className="w-0 h-0 border-x-[4px] border-x-transparent border-t-[4px] border-t-[#444444]" />
    </div>
  </div>
);

const ScrollH = () => (
  <div className="h-[14px] shrink-0 flex items-center bg-[#fdfdfd] border-t border-[#c8c8c8]">
    <div className="w-[15px] flex justify-center">
      <span className="w-0 h-0 border-y-[4px] border-y-transparent border-r-[4px] border-r-[#444444]" />
    </div>
    <div className="w-[95px] h-full border-x border-[#e4e4e4]" />
    <div className="flex-1 h-full bg-[#e6e6e6]" />
    <div className="w-[15px] flex justify-center">
      <span className="w-0 h-0 border-y-[4px] border-y-transparent border-l-[4px] border-l-[#444444]" />
    </div>
    <div className="w-[14px] h-full bg-[#f0f0f0] border-l border-[#e4e4e4]" />
  </div>
);

/* ---------- map, coordinates traced from the flood raster ---------- */
const outline =
  '665,42 720,52 790,72 850,110 885,122 920,150 965,168 1030,220 1060,265 1078,295 1103,303 1151,327 1205,376 1231,420 1248,465 1270,497 1290,528 1316,605 1331,641 1375,654 1442,697 1485,756 1514,819 1535,933 1529,999 1510,1063 1463,1143 1427,1199 1346,1264 1267,1285 1222,1283 1166,1295 1140,1290 1103,1354 1030,1418 960,1435 880,1442 810,1428 725,1443 660,1430 615,1413 580,1430 540,1475 490,1502 420,1515 350,1495 285,1450 215,1350 150,1285 115,1225 92,1120 92,1040 110,950 105,910 75,860 45,770 18,690 17,610 45,520 70,460 100,400 165,330 215,298 260,280 325,225 370,210 375,195 420,185 445,150 520,90 590,55';

const north =
  '160,115 165,135 175,150 172,175 180,190 150,215 130,225 125,235 140,260 120,285 115,310 105,335 90,325 80,315 60,315 48,295 60,280 90,335 95,350 70,362 20,368 15,378 45,390 60,420 65,460 80,472 90,445 125,435 125,425 85,410 90,385 105,370 120,375 135,385 160,395 205,370 240,360 270,375 290,410 325,425 335,445 360,460 380,488 390,450 405,435 430,400 432,365 420,340 450,335 445,300 430,260 430,230 465,220 465,195 445,180 395,185 385,190 395,145 415,145 390,135 380,120 368,85 375,70 350,45 400,0 300,-10 100,-10';
const northHoles = [
  '312,192 345,185 372,195 372,208 340,208 315,200',
  '350,140 385,135 390,145 385,190 370,170',
  '228,305 240,278 265,290 250,300',
];
const strip =
  '230,580 248,582 258,607 275,612 282,625 325,628 345,622 372,615 395,590 412,585 422,600 412,625 372,630 362,640 365,672 370,680 372,730 400,770 425,785 415,805 440,820 455,808 490,850 520,880 540,878 530,920 540,950 555,958 570,935 600,930 625,965 640,985 660,960 690,950 715,975 720,1025 345,1025 350,1000 375,985 385,965 410,940 450,915 440,905 370,892 345,875 325,855 305,800 265,750 235,710 210,680 205,650 225,635 250,620 245,600 230,590';
const stripHoles = [
  '290,665 320,650 350,660 365,672 335,680 300,690',
  '330,700 365,697 372,750 345,760 328,735',
  '350,770 385,755 400,770 385,795 350,800',
  '485,900 510,910 500,930 485,920',
  '275,650 285,650 285,660 275,660',
];
const stripBits = [
  '560,830 582,818 580,835 565,840',
  '568,855 578,858 570,872',
  '390,550 400,530 412,550',
];
const stripLines = [
  '345,875 370,915 385,970',
  '330,622 345,600 360,570',
  '372,598 380,570',
  '398,590 412,565 412,545',
];
const body =
  '228,10 250,0 620,0 650,30 660,55 710,35 745,55 790,65 790,15 805,15 808,60 800,90 820,115 825,140 860,130 900,155 940,165 950,190 1025,195 1015,205 960,205 915,200 880,190 865,230 875,250 840,262 790,275 830,290 850,280 815,310 820,365 785,370 810,420 855,460 885,490 860,520 830,490 780,490 735,510 735,545 790,530 815,555 820,590 880,620 900,575 900,545 935,560 905,585 920,640 915,670 920,720 940,735 930,780 940,830 975,890 995,895 970,895 910,850 905,880 880,935 835,960 840,1000 880,1040 820,1095 720,1145 690,1120 650,1095 635,1110 605,1135 600,1110 585,1065 610,1040 605,1000 580,985 520,970 490,925 520,900 540,915 600,950 580,870 590,840 615,830 590,800 555,740 520,680 430,730 400,700 360,745 300,735 255,700 205,670 200,640 215,625 185,600 180,570 105,515 80,540 75,585 55,545 75,500 45,445 60,405 115,380 100,400 160,425 190,440 190,385 155,365 190,335 190,290 150,285 185,240 150,230 180,175 210,150 195,115 260,100 250,60';
const bodyHoles = [
  '620,215 660,215 705,245 660,250 635,270 635,310 620,325 610,315 625,285 590,280 595,260 620,260',
  '580,295 590,300 585,325 590,350 640,380 625,395 595,395 570,370 570,330',
  '400,620 420,615 435,635 415,645',
  '800,620 840,615 868,632 850,650 815,650',
  '635,665 700,645 720,680 685,715 650,690',
  '720,680 760,695 800,700 825,750 790,730 760,710',
  '860,670 890,660 905,735 860,750',
  '745,810 785,785 790,790 755,820',
  '705,820 720,820 718,850 705,850',
  '650,840 680,835 690,875 665,865',
  '630,970 665,965 660,990 640,1000',
  '725,1070 745,1085 770,1105 745,1105',
  '740,1040 760,1045 765,1075 745,1060',
  '810,985 830,985 820,1020',
  '825,1045 845,1040 860,1065 830,1090',
  '610,570 640,565 645,580 620,590',
  '610,620 635,640 640,655 625,650',
  '840,485 860,490 850,505',
  '795,150 820,155 810,200 795,200',
  '715,65 728,72 720,80',
  '185,310 200,310 195,325',
  '70,495 90,495 85,510',
  '750,608 768,608 768,616 750,616',
];
const bodySpecks = [
  [90, 268, 8, 8], [120, 268, 10, 10], [118, 325, 18, 8], [155, 322, 12, 8], [130, 358, 10, 8], [50, 203, 6, 8], [475, 892, 8, 8],
  [470, 955, 14, 24], [952, 595, 14, 20], [1030, 718, 6, 4], [980, 225, 14, 14], [1010, 240, 8, 8], [365, 692, 6, 6], [185, 625, 6, 8],
];

const MapCanvas = () => (
  <div className="flex-1 min-w-0 bg-white border-l border-b border-[#bdbdbd]">
    <svg viewBox="301 121 1148 890" preserveAspectRatio="none" className="block w-full h-full" shapeRendering="crispEdges">
      <g transform="translate(340 120) scale(.6888 .5737)">
        <polygon points={outline} fill="#000" />
      </g>
      <g transform="translate(400 270) scale(.33333)" fill="#fff">
        <polygon points={north} />
        {northHoles.map((p) => <polygon key={p} points={p} fill="#000" />)}
        <polygon points={strip} />
        {stripHoles.map((p) => <polygon key={p} points={p} fill="#000" />)}
        {stripBits.map((p) => <polygon key={p} points={p} />)}
        {stripLines.map((p) => <polyline key={p} points={p} fill="none" stroke="#fff" strokeWidth="3" />)}
      </g>
      <g transform="translate(440 600) scale(.33333)" fill="#fff">
        <polygon points={body} />
        {bodyHoles.map((p) => <polygon key={p} points={p} fill="#000" />)}
        {bodySpecks.map(([x, y, w, h]) => <rect key={`${x}-${y}`} x={x} y={y} width={w} height={h} />)}
      </g>
    </svg>
  </div>
);

const menus: React.ReactNode[] = [
  'Project',
  <><u>E</u>dit</>,
  <><u>V</u>iew</>,
  <><u>L</u>ayer</>,
  <><u>S</u>ettings</>,
  <><u>P</u>lugins</>,
  <>Vect<u>o</u>r</>,
  <><u>R</u>aster</>,
  <><u>D</u>atabase</>,
  <><u>W</u>eb</>,
  <><u>M</u>esh</>,
  <>Pr<u>o</u>cessing</>,
  <><u>H</u>elp</>,
];

const Spin = ({ value, className }: { value: string; className: string }) => (
  <div className={`flex h-[22px] bg-white border border-[#c4c4c4] rounded-[2px] shrink-0 ${className}`}>
    <span className="flex-1 pl-[4px] leading-[20px]">{value}</span>
    <div className="w-[13px] border-l border-[#d8d8d8] flex flex-col items-center justify-center gap-[3px] bg-[#f4f4f4]">
      <span className="w-0 h-0 border-x-[3px] border-x-transparent border-b-[4px] border-b-[#666666]" />
      <span className="w-0 h-0 border-x-[3px] border-x-transparent border-t-[4px] border-t-[#666666]" />
    </div>
  </div>
);

export default function App() {
  return (
    <div
      className="w-[1920px] h-[1040px] overflow-hidden flex flex-col bg-[#f0f0f0] text-black text-[12px]"
      style={{ fontFamily: 'Roboto, "Noto Sans", sans-serif' }}
    >
      {/* Title bar */}
      <div className="h-[23px] shrink-0 bg-white flex items-center">
        <div className="pl-[3px] w-[23px]">
          <svg viewBox="0 0 16 16" className="block w-[15px] h-[15px]">{tree.qgis}</svg>
        </div>
        <span>IrelandFlooding — QGIS [GY4006 GIS 2023]</span>
        <div className="ml-auto flex pr-[3px]">
          <div className="w-[45px] h-[23px] flex items-center justify-center">
            <div className="w-[10px] h-px bg-black" />
          </div>
          <div className="w-[45px] h-[23px] flex items-center justify-center">
            <svg viewBox="0 0 10 11" className="block w-[10px] h-[11px]">
              <path d="M.5 3h7v7.500h-7zM2.500 3V.5h7v7.500h-2" fill="none" stroke="#000" />
            </svg>
          </div>
          <div className="w-[45px] h-[23px] flex items-center justify-center">
            <svg viewBox="0 0 11 11" className="block w-[11px] h-[11px]">
              <path d="M.5.5l10 10M10.500.5l-10 10" stroke="#000" />
            </svg>
          </div>
        </div>
      </div>

      {/* Menu bar */}
      <div className="h-[19px] shrink-0 flex items-center gap-[13px] pl-[10px] bg-[#efefef] border-b border-[#dadada]">
        {menus.map((m, i) => <span key={i}>{m}</span>)}
      </div>

      {/* Toolbars */}
      <ToolRow items={row1} className="h-[40px] shrink-0 border-b border-[#b9b9b9]" />
      <ToolRow items={row2} className="h-[39px] shrink-0 border-b-2 border-[#b9b9b9]" />

      {/* Docks and canvas */}
      <div className="flex-1 min-h-0 flex">
        <div className="w-[295px] shrink-0 flex flex-col pl-[1px]">
          <div className="pl-[3px]"><DockHead title="Browser" /></div>
          <div className="h-[32px] flex items-center">
            <div className="w-[28px] flex justify-center"><Ic n="addSel" className="w-[16px] h-[16px]" /></div>
            <div className="w-[25px] flex justify-center"><Ic n="refresh" className="w-[16px] h-[16px]" /></div>
            <div className="w-[25px] flex justify-center"><Ic n="filter" className="w-[16px] h-[16px]" /></div>
            <div className="w-[25px] flex justify-center"><Ic n="collapse" className="w-[16px] h-[16px]" /></div>
            <div className="w-[25px] flex justify-center"><Ic n="info" className="w-[16px] h-[16px]" /></div>
          </div>
          <div className="h-[393px] shrink-0 border border-[#b9b9b9] bg-white flex flex-col">
            <div className="flex-1 min-h-0 flex">
              <BrowserTree />
              <ScrollV />
            </div>
            <ScrollH />
          </div>
          <div className="h-[6px] shrink-0" />
          <div className="pl-[3px]"><DockHead title="Layers" /></div>
          <div className="h-[32px] flex items-center">
            <div className="w-[30px] flex justify-center"><Ic n="brush" className="w-[18px] h-[18px]" /></div>
            <div className="w-[24px] flex justify-center"><Ic n="addGroup" className="w-[16px] h-[16px]" /></div>
            <div className="w-[28px] flex justify-center"><Ic n="eye" className="w-[18px] h-[18px]" /></div>
            <div className="w-[24px] flex justify-center"><Ic n="filterDrop" className="w-[18px] h-[18px]" /></div>
            <div className="w-[24px] flex justify-center"><Ic n="expr" className="w-[16px] h-[16px]" /></div>
            <div className="w-[16px] flex justify-center"><Caret dim /></div>
            <div className="w-[28px] flex justify-center"><Ic n="collapse" className="w-[16px] h-[16px]" /></div>
            <div className="w-[25px] flex justify-center"><Ic n="expand" className="w-[16px] h-[16px]" /></div>
            <div className="w-[23px] flex justify-center"><Ic n="removeLayer" className="w-[16px] h-[16px]" /></div>
          </div>
          <LayersTree />
        </div>

        <div className="w-[5px] shrink-0" />
        <MapCanvas />

        <div className="w-[471px] shrink-0 flex flex-col pl-[6px] border-l border-[#bdbdbd]">
          <div className="pl-[3px]"><DockHead title="Identify Results" /></div>
          <div className="h-[32px] flex items-center text-[#000]">
            <div className="w-[30px] flex justify-center"><Ic n="treeCard" className="w-[16px] h-[16px]" /></div>
            <div className="w-[2px] h-[16px] bg-[#dddddd]" />
            <div className="w-[28px] flex justify-center"><Ic n="expand" className="w-[16px] h-[16px]" /></div>
            <div className="w-[25px] flex justify-center"><Ic n="collapse" className="w-[16px] h-[16px]" /></div>
            <div className="w-[25px] flex justify-center"><Ic n="starDown" className="w-[16px] h-[16px]" /></div>
            <div className="w-[2px] h-[16px] bg-[#dddddd]" />
            <div className="w-[30px] flex justify-center"><Ic n="deselect" className="w-[16px] h-[16px]" /></div>
            <div className="w-[2px] h-[16px] bg-[#dddddd]" />
            <div className="w-[30px] flex justify-center"><Ic n="copy" className="w-[16px] h-[16px]" /></div>
            <div className="w-[25px] flex justify-center"><Ic n="printer" className="w-[16px] h-[16px]" /></div>
            <div className="w-[2px] h-[16px] bg-[#dddddd]" />
            <div className="w-[29px] flex justify-center"><Ic n="identifySel" className="w-[18px] h-[18px]" /></div>
            <div className="w-[10px] flex justify-center"><Caret /></div>
            <div className="w-[29px] flex justify-center"><Ic n="wrench" className="w-[18px] h-[18px]" /></div>
            <div className="w-[2px] h-[16px] bg-[#dddddd] mx-[3px]" />
            <div className="w-[16px] flex justify-center"><Ic n="help" className="w-[16px] h-[16px]" /></div>
          </div>
          <div className="h-[773px] shrink-0 border border-r-0 border-[#b9b9b9] bg-white">
            <div className="h-[19px] flex bg-linear-to-b from-[#fbfbfb] to-[#ececec] border-b border-[#b9b9b9]">
              <div className="w-[100px] pl-[3px] leading-[18px] border-r border-[#c8c8c8]">Feature</div>
              <div className="pl-[2px] leading-[18px]">Value</div>
            </div>
          </div>
          <div className="h-[36px] flex items-center pl-[4px] pr-[5px]">
            <span className="w-[33px]">Mode</span>
            <div className="flex-1 h-[22px] border border-[#c4c4c4] rounded-[2px] flex items-center justify-between pl-[3px] pr-[5px] bg-[#f2f2f2]">
              <span>Current Layer</span>
              <Caret />
            </div>
          </div>
          <div className="flex-1 flex items-start pt-[2px] pl-[4px] text-[#8c8c8c]">
            <span className="w-[29px] leading-[22px]">View</span>
            <div className="w-[72px] h-[22px] border border-[#d4d4d4] rounded-[2px] flex items-center justify-between pl-[3px] pr-[8px]">
              <span>Tree</span>
              <Caret dim />
            </div>
          </div>
        </div>
      </div>

      {/* Status bar */}
      <div className="h-[28px] shrink-0 flex items-center text-[11px]">
        <div className="ml-[4px] w-[200px] h-[22px] bg-white border border-[#b9b9b9] rounded-[3px] flex items-center pl-[9px] text-[#767676] text-[12px] shrink-0">
          <Ic n="search" className="w-[13px] h-[13px]" />
          <span className="ml-[6px]">Type to locate (Ctrl+K)</span>
        </div>
        <div className="flex-1" />
        <span className="w-[53px] shrink-0 text-[11.500px]">Coordinate</span>
        <div className="ml-[4px] w-[91px] h-[22px] bg-white border border-[#c4c4c4] rounded-[2px] text-center leading-[20px] text-[12px] shrink-0">655281,710306</div>
        <div className="w-[27px] flex justify-center shrink-0"><Ic n="ctm" className="w-[16px] h-[16px]" /></div>
        <span className="ml-[5px] w-[25px] shrink-0">Scale</span>
        <div className="ml-[4px] w-[80px] h-[22px] flex bg-white border border-[#c4c4c4] rounded-[2px] text-[12px] shrink-0">
          <span className="flex-1 pl-[3px] leading-[20px]">1:128563</span>
          <div className="w-[19px] border-l border-[#d8d8d8] flex items-center justify-center bg-[#f6f6f6]"><Caret /></div>
        </div>
        <div className="w-[33px] flex justify-center shrink-0"><Ic n="lock" className="w-[16px] h-[18px]" /></div>
        <span className="w-[44px] shrink-0">Magnifier</span>
        <Spin value="100%" className="ml-[4px] w-[84px] text-[12px]" />
        <span className="ml-[8px] w-[42px] shrink-0">Rotation</span>
        <Spin value="0.0 °" className="ml-[9px] w-[83px] text-[12px]" />
        <div className="ml-[8px]"><Check /></div>
        <span className="ml-[4px] w-[36px] shrink-0">Render</span>
        <div className="ml-[16px]"><Ic n="crs" className="w-[15px] h-[15px]" /></div>
        <span className="ml-[1px] w-[54px] shrink-0">EPSG:2157</span>
        <div className="ml-[23px] mr-[6px]"><Ic n="msg" className="w-[17px] h-[17px]" /></div>
      </div>
    </div>
  );
}
